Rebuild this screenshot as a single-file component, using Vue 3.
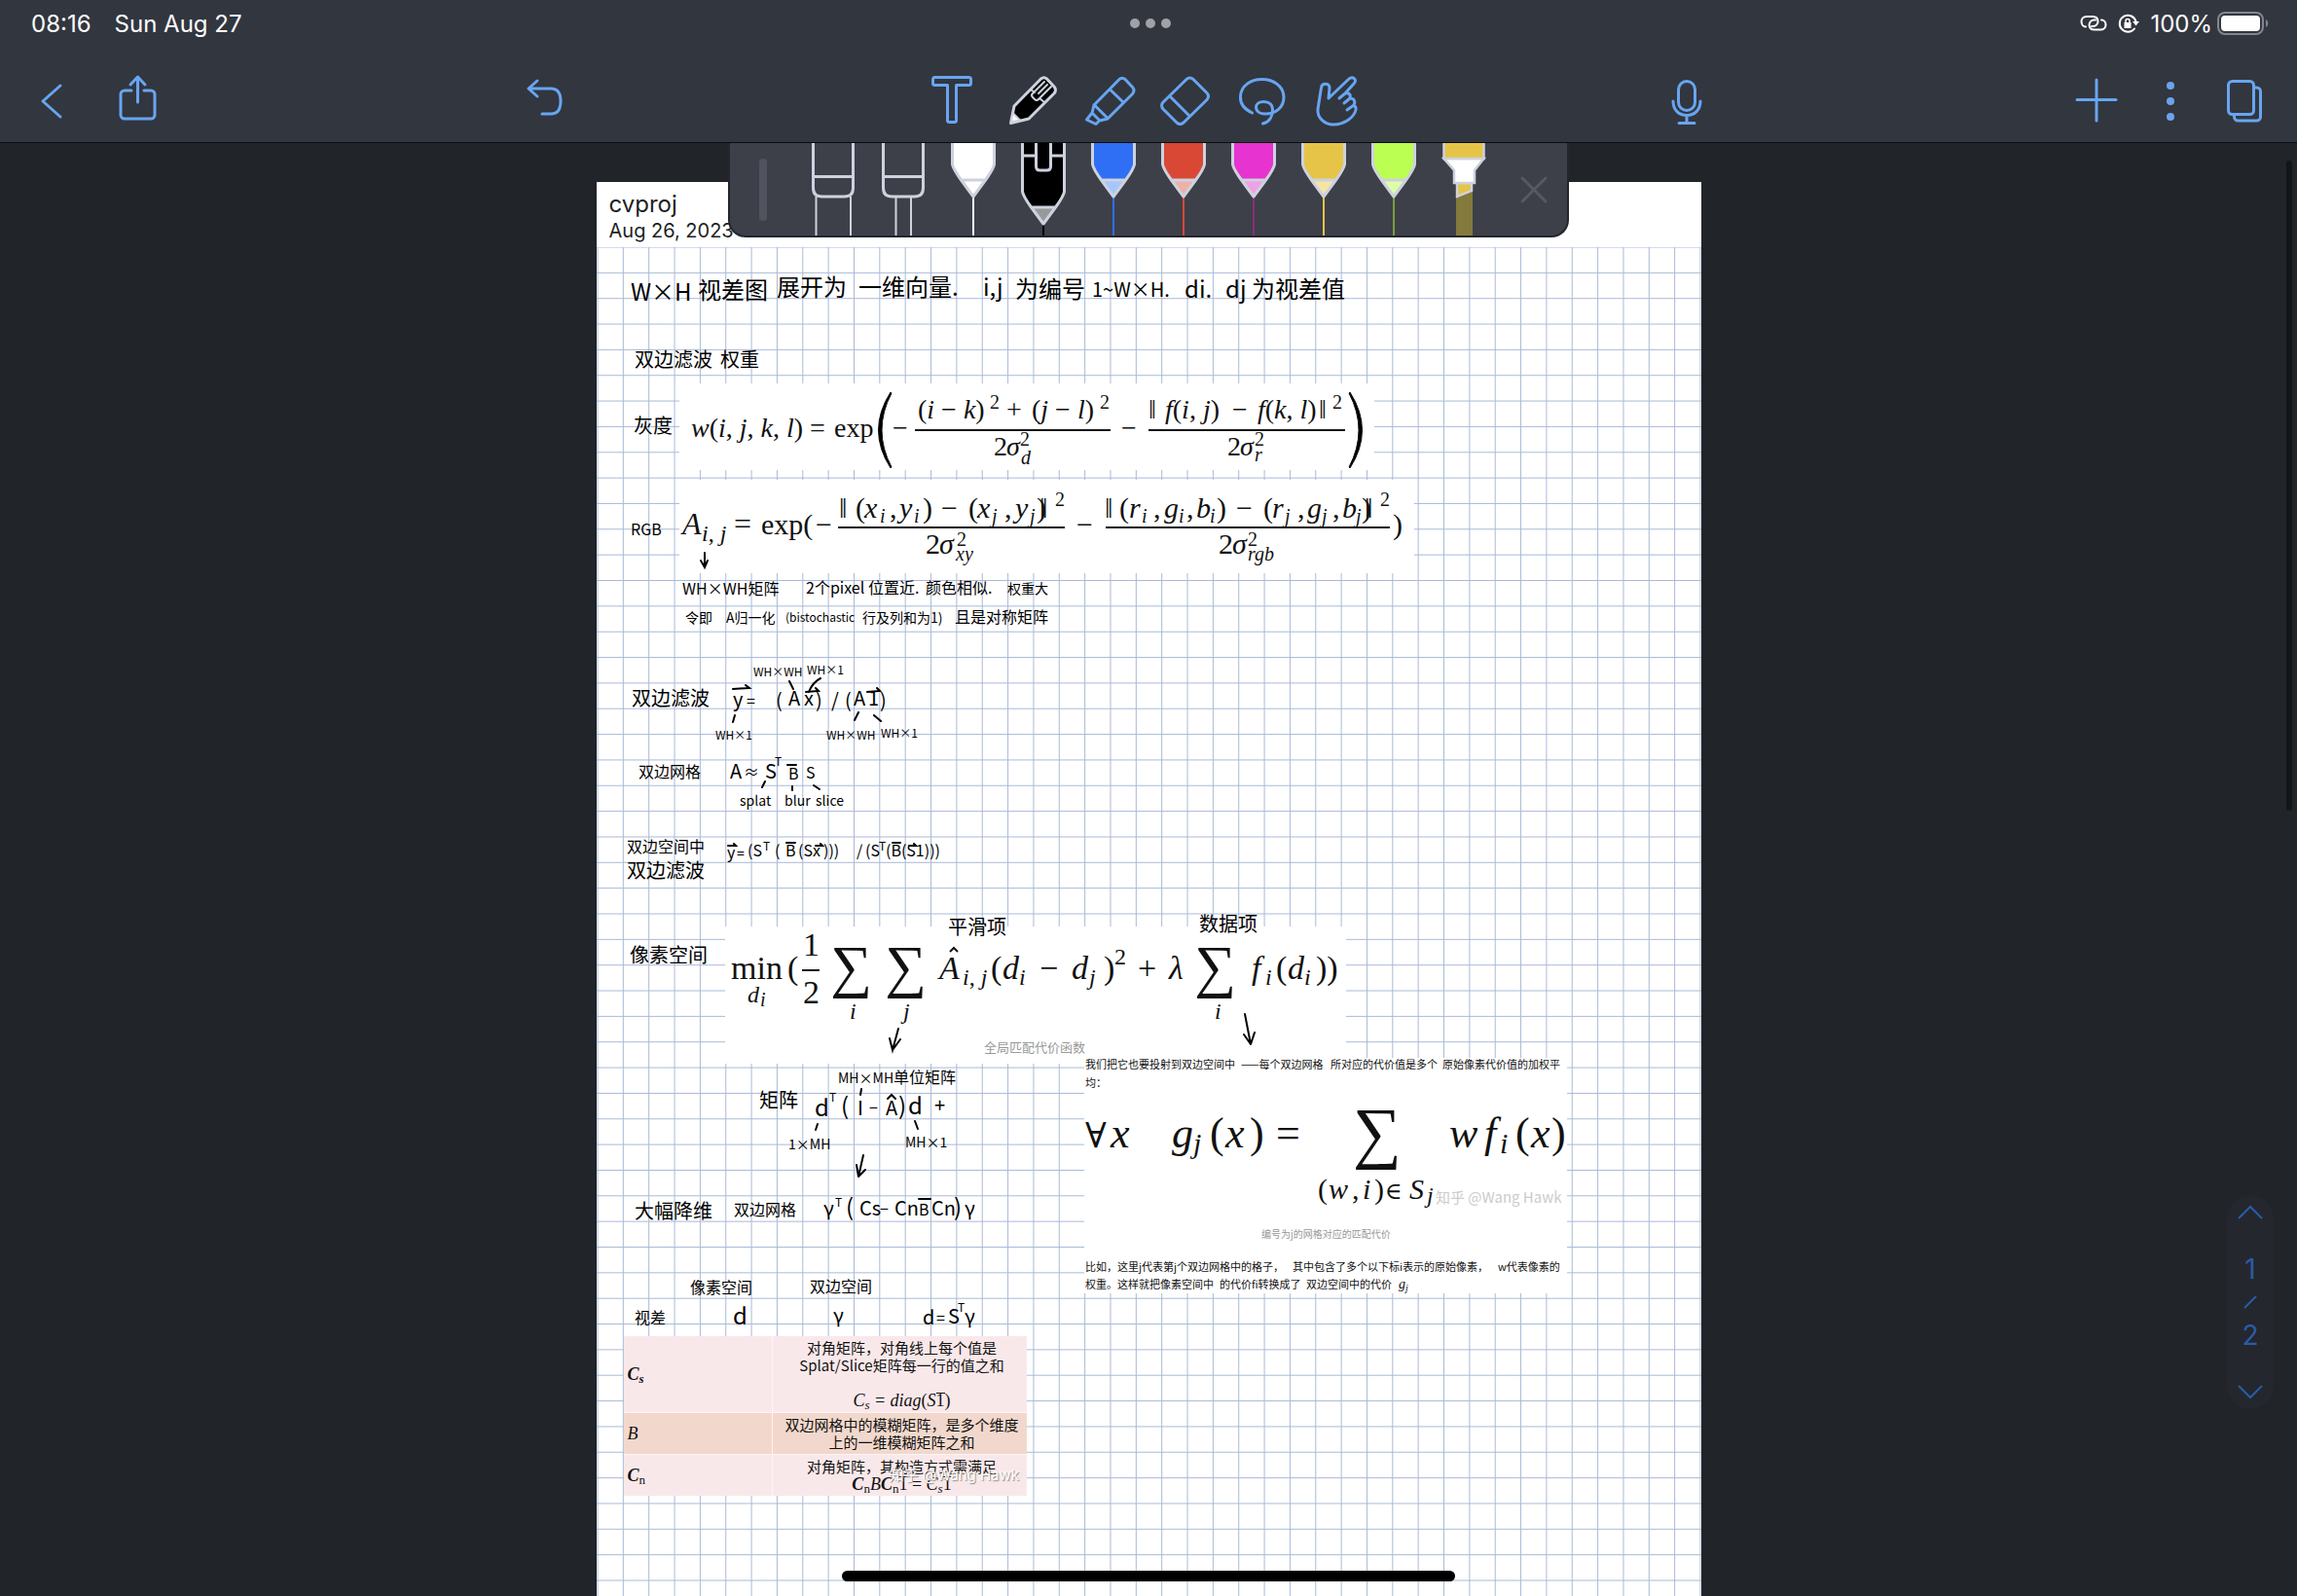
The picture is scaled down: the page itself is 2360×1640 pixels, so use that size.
<script setup>
const pens = [
  { body: '#ffffff', tip: '#ffffff', line: '#ffffff' },
  { body: '#000000', tip: '#999999', line: '#000000', active: true },
  { body: '#2f6ff6', tip: '#a5c5fb', line: '#2f6ff6' },
  { body: '#d94835', tip: '#efb0a8', line: '#d94835' },
  { body: '#e733cf', tip: '#f19fe6', line: '#8a2d80' },
  { body: '#e6c447', tip: '#f5e5a3', line: '#e6c447' },
  { body: '#bbff52', tip: '#dcffa8', line: '#78a03a' },
]

const rows = Array.from({ length: 53 }, (_, i) => 254 + (i * 1370) / 52)
const cols = Array.from({ length: 44 }, (_, i) => 614 + (i * 1133) / 43)

const parse = (src) =>
  src.trim().split('\n').map((l) => {
    const [x, y, size, ...rest] = l.trim().split(' ')
    return { x: +x, y: +y, size: +size, text: rest.join(' ') }
  })

// x  baseline  size  text
const ink = parse(`
648 309 24 W×H
717 307 24 视差图
798 304 24 展开为
882 304 24 一维向量.
1010 304 24 i,j
1043 306 24 为编号
1122 305 20 1~W×H.
1217 306 24 di.
1259 306 24 dj
1286 306 24 为视差值
652 377 20 双边滤波
740 377 20 权重
651 445 20 灰度
648 550 16 RGB
701 611 16 WH×WH矩阵
828 610 16 2个pixel
892 610 16 位置近.
951 610 16 颜色相似.
1035 610 14 权重大
704 640 14 令即
746 640 14 A归一化
807 639 12 (bistochastic
886 640 14 行及列和为1)
981 640 16 且是对称矩阵
774 695 12 WH×WH
829 693 12 WH×1
649 725 20 双边滤波
753 726 20 y
767 726 16 =
797 727 20 (
810 725 20 A
826 725 20 x
838 727 20 )
854 727 20 /
868 727 20 (
877 725 20 A
892 725 20 1
904 727 20 )
735 760 12 WH×1
849 760 12 WH×WH
905 758 12 WH×1
656 799 16 双边网格
750 800 20 A
764 799 16 ≈
786 800 20 S
796 787 12 T
810 801 16 B
828 800 16 S
760 828 14 splat
806 828 14 blur
838 828 14 slice
644 876 16 双边空间中
644 902 20 双边滤波
747 882 16 y
757 882 14 =
768 880 16 (S
784 874 12 T
796 880 16 (
807 880 16 B
820 880 16 (Sx
846 880 16 )))
880 880 16 /
889 880 16 (S
903 874 12 T
910 880 16 (B(S1)))
647 989 20 像素空间
974 960 20 平滑项
1232 957 20 数据项
861 1113 14 MH×MH
918 1113 16 单位矩阵
780 1138 20 矩阵
837 1147 24 d
852 1132 12 T
864 1145 24 (
881 1146 20 I
893 1144 16 −
910 1146 20 A
923 1145 24 )
933 1145 24 d
960 1143 20 +
810 1181 14 1×MH
930 1179 14 MH×1
652 1252 20 大幅降维
754 1249 16 双边网格
846 1249 20 γ
858 1240 12 T
869 1249 24 (
883 1249 20 Cs
904 1248 16 −
919 1249 20 Cn
944 1249 16 B
957 1249 20 Cn
980 1249 24 )
991 1249 20 γ
709 1329 16 像素空间
832 1328 16 双边空间
652 1360 16 视差
753 1361 24 d
856 1359 20 γ
948 1361 20 d
962 1360 16 =
974 1360 20 S
984 1348 12 T
991 1360 20 γ
`)

const math = parse(`
710 449 28 w(i, j, k, l)
943 430 28 (i − k)
1060 430 28 (j − l)
1034 468 28 σ
1049 477 20 d
1197 430 28 f(i, j)
1292 430 28 f(k, l)
1274 468 28 σ
1289 474 20 r
701 549 32 A
721 556 24 i, j
888 532 30 x
904 537 20 i
924 532 30 y
939 537 20 i
1004 532 30 x
1019 537 20 j
1043 532 30 y
1058 537 20 j
965 569 30 σ
982 576 20 xy
1160 532 30 r
1173 537 20 i
1196 532 30 g
1211 537 20 i
1229 532 30 b
1243 537 20 i
1307 532 30 r
1320 537 20 j
1343 532 30 g
1358 537 20 j
1379 532 30 b
1393 537 20 j
1266 569 30 σ
1282 576 20 rgb
768 1030 24 d
781 1034 20 i
873 1047 24 i
928 1047 24 j
1248 1047 24 i
965 1006 34 A
989 1012 24 i, j
1030 1006 34 d
1047 1012 24 i
1101 1006 34 d
1119 1012 24 j
1201 1006 34 λ
1286 1006 34 f
1300 1012 24 i
1323 1006 34 d
1340 1012 24 i
1141 1179 44 x
1204 1179 44 g
1226 1185 30 j
1259 1179 44 x
1365 1232 30 w
1400 1232 30 i
1448 1232 30 S
1466 1236 24 j
1489 1179 44 w
1525 1179 44 f
1541 1185 30 i
1573 1179 44 x
1437 1324 14 g
1444 1327 10 j
832 449 28 =
857 449 28 exp
917 449 28 −
1017 420 20 2
1034 430 28 +
1130 420 20 2
1021 468 28 2
1048 458 20 2
1152 449 28 −
1180 430 28 ‖
1266 430 28 −
1355 430 28 ‖
1369 420 20 2
1261 468 28 2
1289 458 20 2
754 549 32 =
782 549 30 exp(
838 549 30 −
862 532 30 ‖
879 532 30 (
914 532 30 ,
948 532 30 )
967 532 30 −
995 532 30 (
1032 532 30 ,
1065 532 30 )
1068 532 30 ‖
1084 520 20 2
951 569 30 2
983 561 20 2
1106 549 30 −
1135 532 30 ‖
1150 532 30 (
1185 532 30 ,
1219 532 30 ,
1250 532 30 )
1270 532 30 −
1298 532 30 (
1333 532 30 ,
1369 532 30 ,
1399 532 30 )
1402 532 30 ‖
1418 520 20 2
1252 569 30 2
1282 561 20 2
1431 549 30 )
751 1006 34 min
809 1006 34 (
825 982 34 1
825 1031 34 2
1018 1006 34 (
1068 1006 34 −
1134 1006 34 )
1145 991 24 2
1169 1006 34 +
1311 1006 34 (
1352 1006 34 ))
1243 1179 44 (
1284 1179 44 )
1311 1179 44 =
1354 1232 30 (
1389 1232 30 ,
1412 1232 30 )
1557 1179 44 (
1594 1179 44 )
853 1013 60 ∑
909 1013 60 ∑
1227 1013 60 ∑
1390 1187 70 ∑
1115 1179 36 ∀
1423 1232 24 ∈
`)

// Variables are slanted, operators, digits and brackets stand upright.
const upright = /(exp|min|[^a-zσλ]+)/i
const runs = (text) =>
  text.split(upright).filter(Boolean).map((s) => ({ s, up: upright.test(s) }))

const prose = parse(`
1115 1098 11 我们把它也要投射到双边空间中
1275 1098 11 ——每个双边网格
1367 1098 11 所对应的代价值是多个
1482 1098 11 原始像素代价值的加权平
1115 1117 11 均：
1115 1306 11 比如，这里j代表第j个双边网格中的格子，
1328 1306 11 其中包含了多个以下标i表示的原始像素，
1539 1306 11 w代表像素的
1115 1324 11 权重。这样就把像素空间中
1253 1324 11 的代价fi转换成了
1342 1324 11 双边空间中的代价
`)
</script>

<template>
  <div class="app">
    <header class="top">
      <div class="status">
        <div class="when"><span>08:16</span><span>Sun Aug 27</span></div>
        <div class="multitask"><i></i><i></i><i></i></div>
        <div class="state">
          <svg width="28" height="18" viewBox="0 0 28 18" class="w">
            <path d="M6 12.500C3 12.500 1.500 9.500 1.500 7S3.500 2 7 2h6c4 0 5.500 2.500 5.500 5s-2 5-5 5H12" />
            <path d="M22 5.500c3 0 4.500 2.500 4.500 5s-2 5-5.500 5h-6c-4 0-5.500-2.500-5.500-5s2-5 5-5H16" />
          </svg>
          <svg width="22" height="20" viewBox="0 0 22 20" class="w">
            <path d="M17 15.500A8.500 8.500 0 1 1 18.500 8" />
            <path d="M15 8h7l-3.500 4.500z" fill="#fff" stroke="none" />
            <path d="M6.500 9h7v6h-7z" fill="#fff" stroke="none" /><path d="M8 9V7.500a2 2 0 0 1 4 0V9" stroke-width="1.500" />
          </svg>
          <span>100%</span>
          <svg width="54" height="24" viewBox="0 0 54 24">
            <rect x="1" y="1" width="46" height="22" rx="7" fill="none" stroke="#83868c" stroke-width="2" />
            <rect x="4" y="4" width="40" height="16" rx="4" fill="#fff" />
            <path d="M50 8c3 1.500 3 6.500 0 8z" fill="#83868c" />
          </svg>
        </div>
      </div>

      <nav class="bar">
        <div class="side left">
          <button aria-label="Back"><svg viewBox="0 0 52 52"><path d="M35 11 17 27l18 16" /></svg></button>
          <button aria-label="Share"><svg viewBox="0 0 52 52"><path d="M20 16h-7a4 4 0 0 0-4 4v21a4 4 0 0 0 4 4h27a4 4 0 0 0 4-4V20a4 4 0 0 0-4-4h-7M26.500 28V3M19 10l7.500-8 7.500 8" /></svg></button>
          <button aria-label="Undo" class="undo"><svg viewBox="0 0 52 52"><path d="M18 6 9 14l9 8M9 14h23c7 0 10 5 10 13s-3 13-10 13h-9" /></svg></button>
        </div>
        <div class="tools">
          <button aria-label="Text"><svg viewBox="0 0 52 52"><path d="M3.500 2.500h36a2 2 0 0 1 2 2v4a2 2 0 0 1-2 2h-13V47a1.500 1.500 0 0 1-1.500 1.500h-6a1.500 1.500 0 0 1-1.500-1.500V10.500h-13a2 2 0 0 1-2-2v-4a2 2 0 0 1 2-2z" /></svg></button>
          <button aria-label="Pen"><svg viewBox="0 0 52 52">
            <path d="M3.500 49.500 7 32 34.500 4q3-2.500 6 0l7.500 8q3 3.500 0 7L22 45z" fill="#000" stroke="#cdd2de" />
            <path d="M5.500 39 4 48.500l9-2z" fill="#fff" stroke="#cdd2de" stroke-width="2" />
            <path d="m24 15 4 3M38 7l-8 8-4 4q-2 2 0 4l2 2q2 2 4 0L45 12M32 19l9-9M33 24l5 4" stroke="#cdd2de" stroke-width="2" />
          </svg></button>
          <button aria-label="Highlighter"><svg viewBox="0 0 52 52"><path d="M10 31 36 4.500q3-2.500 6 0l7.500 8q3 3.500 0 7L24 45l-8.500 2-3.500 3.500-9.500-4.500L8 39zM26.500 15 40 28M10 30.500 24 44.500M8 39l8 8" /></svg></button>
          <button aria-label="Eraser"><svg viewBox="0 0 52 52"><path d="M26 4.500q3.500-3 7 0l14 14q3 3.500 0 7L23 49q-3.500 3-7 0L2 35q-3-3.500 0-7zM9 22l20 20" /></svg></button>
          <button aria-label="Lasso"><svg viewBox="0 0 52 52"><path d="M14.500 39C6 35 2 29 2.500 22 3 11 13 4.500 24.500 4.500 37 4.500 47 12 47 23S38 40 28 40c-6 0-9.500-3-9.500-7 0-3.500 3.500-5.500 8-5.500 5.500 0 9 3 9 8.500 0 7-3.500 12.500-10 14" /></svg></button>
          <button aria-label="Hand"><svg viewBox="0 0 52 52"><path d="M14 24 15 13c0-5-8-5-8.500 0L3 35c-1 9 7 16 16 16 11 0 21-7 23-15 .5-3-.5-4-2-5 2-4 0-7-4-7 1-4-1-6-5-5l9-10c4-4-1-8-5-5zM31 19l-6 5M36 24l-6 5M40 31l-7 5" /></svg></button>
        </div>
        <div class="side right">
          <button aria-label="Record" class="mic"><svg viewBox="0 0 52 52"><rect x="17.500" y="6.500" width="17" height="30" rx="8.500" /><path d="M12 27c0 9 6 14.500 14 14.500S40 36 40 27M26 42v7M18 49.500h16" /></svg></button>
          <button aria-label="Add"><svg viewBox="0 0 52 52"><path d="M26 5v42M6 25.500h40" /></svg></button>
          <button aria-label="More"><svg viewBox="0 0 52 52" class="dots"><circle cx="26" cy="11" r="4" /><circle cx="26" cy="27" r="4" /><circle cx="26" cy="43" r="4" /></svg></button>
          <button aria-label="Pages"><svg viewBox="0 0 52 52"><rect x="9.500" y="6.500" width="26" height="34" rx="4" /><path d="M36 13h2.500a4 4 0 0 1 4 4v26a4 4 0 0 1-4 4h-19a4 4 0 0 1-4-4v-2" /></svg></button>
        </div>
      </nav>
    </header>

    <main class="desk">
      <article class="paper">
        <header class="title">
          <h1>cvproj</h1>
          <time>Aug 26, 2023</time>
        </header>
        <div class="canvas">
          <svg class="sheet" viewBox="613 254 1135 1386">
            <g class="grid">
              <line v-for="y in rows" :key="'r' + y" x1="613" x2="1748" :y1="y" :y2="y" />
              <line v-for="x in cols" :key="'c' + x" y1="254" y2="1640" :x1="x" :x2="x" />
            </g>
            <g fill="#fff">
              <rect x="698" y="394" width="714" height="89" />
              <rect x="698" y="493" width="755" height="96" />
              <rect x="745" y="952" width="638" height="141" />
              <rect x="1114" y="1087" width="496" height="242" />
            </g>

            <g class="rules">
              <path d="M940 442h201M1180 442h202M861 542h233M1136 542h292M824 997h18" />
              <path d="m976 978 4-4 4 4" />
            </g>
            <path d="M915 403Q890 442 915 481L916 480Q896 442 916 404zM1387 403Q1412 442 1387 481L1386 480Q1406 442 1386 404z" stroke="#111" />

            <text v-for="(t, i) in math" :key="'m' + i" class="math" :x="t.x" :y="t.y" :font-size="t.size"><tspan v-for="(r, j) in runs(t.text)" :key="j" :class="{ up: r.up }">{{ r.s }}</tspan></text>
            <text v-for="(t, i) in prose" :key="'p' + i" class="prose" :x="t.x" :y="t.y" :font-size="t.size">{{ t.text }}</text>
            <text class="caption" x="1011" y="1081" font-size="13">全局匹配代价函数</text>
            <text class="caption" x="1296" y="1272" font-size="10">编号为j的网格对应的匹配代价</text>
            <text class="mark" x="1475" y="1236" font-size="15">知乎 @Wang Hawk</text>

            <text v-for="(t, i) in ink" :key="'k' + i" class="ink" :x="t.x" :y="t.y" :font-size="t.size">{{ t.text }}</text>
            <g class="strokes">
              <path d="M724 568v14M720 576l4 7 3-7" />
              <path d="m753 708 17-1-4-3M828 711l13-1-3-3M891 711l13-1-3-3" />
              <path d="m811 700 4 8M843 697q-8 4-12 14M755 735l-2 7M882 732l-4 8M898 735l7 6" />
              <path d="M786 803l-3 6M814 808v4M836 807l6 4M809 786h9" />
              <path d="M748 869h8l-2-2M808 866h9M838 869h7l-2-2M917 866h8M934 869h7l-2-2" />
              <path d="m923 1057-6 22-3-12M917 1079l8-11M1279 1042l6 31-7-10M1285 1073l4-12" />
              <path d="m885 1119-1 6M840 1155l-2 6M940 1152l3 8M912 1129l4-4 4 4" />
              <path d="m887 1187-5 22-2-12M882 1209l7-7M944 1232h12" />
            </g>
          </svg>

          <table class="defs">
            <tbody>
              <tr>
                <th scope="row"><b><em>C<sub>s</sub></em></b></th>
                <td>对角矩阵，对角线上每个值是<br />Splat/Slice矩阵每一行的值之和<br /><br /><span class="eq"><em>C<sub>s</sub> = diag</em>(<em>S</em><span class="vec">1</span>)</span></td>
              </tr>
              <tr class="warm">
                <th scope="row"><em>B</em></th>
                <td>双边网格中的模糊矩阵，是多个维度<br />上的一维模糊矩阵之和</td>
              </tr>
              <tr>
                <th scope="row"><b><em>C</em></b><sub>n</sub></th>
                <td>对角矩阵，其构造方式需满足<br /><span class="eq"><b><em>C</em></b><sub>n</sub><em>B</em><b><em>C</em></b><sub>n</sub><span class="vec">1</span> = <em>C<sub>s</sub></em><span class="vec">1</span></span></td>
              </tr>
            </tbody>
          </table>
          <span class="stamp">知乎 @Wang Hawk</span>
        </div>
      </article>

      <section class="tray" aria-label="Pens">
        <i class="grip"></i>
        <div class="pens">
          <button v-for="n in 2" :key="n" aria-label="Blank pen">
            <svg viewBox="0 0 72 95">
              <g fill="none" stroke="#cdd2de" stroke-width="3">
                <path d="M15.500-2v48q0 9 9 9h23q9 0 9-9V-2M15 34.500h42" />
                <path v-if="n === 1" d="M18.500 55v40M54 55v40" stroke-width="2" />
                <path v-else d="M28.500 55v40M44 55v40" stroke-width="2" />
              </g>
            </svg>
          </button>
          <button v-for="p in pens" :key="p.body" aria-label="Pen">
            <svg viewBox="0 0 72 95">
              <g :transform="p.active ? 'translate(0 28)' : null">
                <path d="M36 55v42" fill="none" stroke-width="2" :stroke="p.line" />
                <path d="M23.500 38h25L36 55z" :fill="p.tip" />
                <path d="M14.500-32V22l9 15h25l9-15V-32z" :fill="p.body" />
                <path d="M14.500-32V22q1 5 9 16L36 55l12.500-17q8-11 9-16V-32M23.500 38h25" fill="none" stroke="#cdd2de" stroke-width="3" stroke-linejoin="round" />
              </g>
              <path v-if="p.active" d="M15 13h13M44 13h13M28.500-2v26q0 4 4 4h7q4 0 4-4V-2" fill="none" stroke="#cdd2de" stroke-width="3" />
            </svg>
          </button>
          <button aria-label="Highlighter pen">
            <svg viewBox="0 0 72 95">
              <path d="M28 50h17v45H28z" fill="#847a3d" />
              <g stroke="#cdd2de" stroke-width="2.500">
                <path d="M29 41h15v8l-15 6z" fill="#e6c447" />
                <path d="M15.500 16h41L47 28v13H26V28z" fill="#fff" />
                <path d="M15.500-4h41v20h-41z" fill="#e6c447" />
              </g>
            </svg>
          </button>
        </div>
        <button aria-label="Close pens" class="close"><svg viewBox="0 0 28 28"><path d="m2 2 24 24M26 2 2 26" /></svg></button>
      </section>

      <aside class="pager">
        <button aria-label="Previous page"><svg viewBox="0 0 28 16"><path d="m2 14 12-12 12 12" /></svg></button>
        <div class="count">
          <span>1</span>
          <svg viewBox="0 0 14 14"><path d="M1 13 13 1" /></svg>
          <span>2</span>
        </div>
        <button aria-label="Next page"><svg viewBox="0 0 28 16"><path d="m2 2 12 12 12-12" /></svg></button>
      </aside>
      <i class="scroll"></i>
      <i class="home"></i>
    </main>
  </div>
</template>

<style>
body {
  margin: 0;
  background: #212429;
}
</style>

<style scoped>
.app {
  min-height: 100vh;
  display: flex;
  flex-direction: column;
  background: #212429;
  font-family: Inter, "Noto Sans CJK SC", sans-serif;
  overflow: hidden;
}
button {
  padding: 0;
  border: 0;
  background: none;
  display: block;
}
svg { display: block; overflow: visible; }
.top {
  background: #32363f;
  border-bottom: 1px solid #0b0c0e;
  color: #fff;
}
.status {
  height: 48px;
  display: grid;
  grid-template-columns: 1fr auto 1fr;
  align-items: center;
  padding: 0 28px 0 32px;
  font-size: 24px;
}
.when { display: flex; gap: 24px; }
.multitask { display: flex; gap: 6px; }
.multitask i { width: 10px; height: 10px; border-radius: 50%; background: #a0a2a8; }
.state { display: flex; justify-content: flex-end; align-items: center; gap: 11px; }
.state svg:last-child { margin-left: -6px; }
.w { fill: none; stroke: #fff; stroke-width: 2; stroke-linecap: round; }
.bar {
  height: 98px;
  display: flex;
  align-items: flex-start;
  justify-content: space-between;
  box-sizing: border-box;
  padding: 29px 28px 0 27px;
}
.bar button { width: 52px; height: 52px; }
.bar svg {
  width: 52px;
  height: 52px;
  fill: none;
  stroke: #68a5f0;
  stroke-width: 3;
  stroke-linecap: round;
  stroke-linejoin: round;
}
.bar .dots { fill: #68a5f0; stroke: none; }
.side { flex: 1; display: flex; }
.left { gap: 36px; }
.undo { margin: 0 370px 0 auto; }
.right { gap: 24px; }
.mic { margin: 0 auto 0 304px; }
.tools { display: flex; gap: 27px; }

.desk {
  flex: 1;
  position: relative;
  padding-top: 40px;
}
.paper {
  max-width: 1135px;
  margin: 0 auto;
  background: #fff;
}
.title {
  height: 67px;
  box-sizing: border-box;
  padding: 8px 13px;
  color: #1d1f22;
}
h1 { margin: 0; font-size: 24px; line-height: 30px; font-weight: 400; }
time { display: block; font-size: 20px; line-height: 25px; }
.canvas { position: relative; }
.sheet { width: 100%; overflow: hidden; }
.grid line { stroke: #a9bad8; stroke-width: 1; }
.rules { fill: none; stroke: #111; stroke-width: 2; }
.math { font-family: "Liberation Serif", "DejaVu Serif", serif; font-style: italic; fill: #111; }
.up { font-style: normal; }
.prose, .caption, .mark, .ink { font-family: "Noto Sans CJK SC", sans-serif; fill: #111; }
.caption { fill: #999; }
.mark { fill: #ccc; }
.ink { fill: #000; }
.strokes { fill: none; stroke: #000; stroke-width: 2; stroke-linecap: round; }

.defs {
  position: absolute;
  left: 28px;
  top: 1119px;
  width: 414px;
  border-collapse: collapse;
  table-layout: fixed;
  font-family: "Noto Sans CJK SC", sans-serif;
  font-size: 15px;
  line-height: 18px;
  color: #111;
  background: #f9e8ea;
}
.defs th {
  width: 148px;
  padding: 0 0 0 4px;
  text-align: left;
  font: 18px "Liberation Serif", serif;
  border-right: 1px solid #fdf4f4;
}
.defs td { padding: 3px 0 3px 5px; text-align: center; white-space: nowrap; }
.defs tr + tr { border-top: 1px solid #fdf4f4; }
.warm { background: #f2d8cc; }
.eq { font: 18px/18px "Liberation Serif", serif; }
sub { font-size: 13px; line-height: 0; vertical-align: -3px; }
.vec { display: inline-block; line-height: 14px; border-top: 1px solid #111; }
.stamp {
  position: absolute;
  left: 301px;
  top: 1252px;
  font-size: 15px;
  line-height: 20px;
  color: #fff;
  text-shadow: 1px 1px 1px #888;
}

.tray {
  position: absolute;
  top: 0;
  left: 50%;
  transform: translateX(-50%);
  height: 97px;
  display: flex;
  align-items: center;
  box-sizing: border-box;
  padding: 0 20px 0 30px;
  background: #3d4049;
  border: 2px solid #23262d;
  border-top: 0;
  border-radius: 0 0 18px 18px;
  overflow: hidden;
}
.grip { width: 8px; height: 64px; border-radius: 4px; background: #50545e; }
.pens { display: flex; margin: 0 22px 0 32px; }
.pens svg { width: 72px; height: 95px; }
.close svg { width: 28px; height: 28px; stroke: #555963; stroke-width: 3; stroke-linecap: round; }

.pager {
  position: absolute;
  right: 24px;
  bottom: 192px;
  width: 48px;
  height: 220px;
  box-sizing: border-box;
  padding: 10px 0;
  border-radius: 24px;
  background: #24272e;
  display: flex;
  flex-direction: column;
  align-items: center;
  justify-content: space-between;
  color: #2a5ca6;
  font-size: 28px;
  line-height: 34px;
}
.pager svg { width: 28px; height: 16px; fill: none; stroke: #2a5ca6; stroke-width: 2; }
.count { display: flex; flex-direction: column; align-items: center; gap: 10px; }
.pager .count svg { width: 14px; height: 14px; }
.scroll {
  position: absolute;
  right: 5px;
  top: 18px;
  width: 6px;
  height: 668px;
  border-radius: 3px;
  background: #131518;
}
.home {
  position: absolute;
  left: 50%;
  bottom: 15px;
  width: 630px;
  height: 11px;
  border-radius: 6px;
  background: #000;
  transform: translateX(-50%);
}
</style>
